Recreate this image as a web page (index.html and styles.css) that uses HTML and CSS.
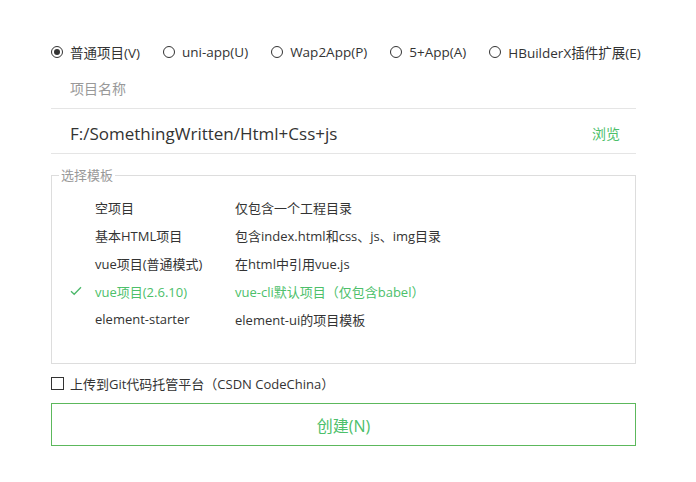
FILE: index.html
```html
<!DOCTYPE html>
<html lang="zh-CN">
<head>
<meta charset="utf-8">
<title>新建项目</title>
<link rel="stylesheet" href="styles.css">
</head>
<body>
<div class="page">
  <div class="radios">
    <label class="radio checked"><span class="dot"></span><span>普通项目(V)</span></label>
    <label class="radio"><span class="dot"></span><span>uni-app(U)</span></label>
    <label class="radio"><span class="dot"></span><span>Wap2App(P)</span></label>
    <label class="radio"><span class="dot"></span><span>5+App(A)</span></label>
    <label class="radio"><span class="dot"></span><span>HBuilderX插件扩展(E)</span></label>
  </div>
  <div class="field name"><span class="placeholder">项目名称</span></div>
  <div class="field path"><span class="value">F:/SomethingWritten/Html+Css+js</span><span class="browse">浏览</span></div>
  <fieldset class="templates">
    <legend>选择模板</legend>
    <div class="row"><span class="mark"></span><span class="t">空项目</span><span class="d">仅包含一个工程目录</span></div>
    <div class="row"><span class="mark"></span><span class="t">基本HTML项目</span><span class="d">包含index.html和css、js、img目录</span></div>
    <div class="row"><span class="mark"></span><span class="t">vue项目(普通模式)</span><span class="d">在html中引用vue.js</span></div>
    <div class="row active"><span class="mark"><svg width="12" height="10" viewBox="0 0 12 10"><path d="M1 5.2 L4.2 8.3 L11 1.3" fill="none" stroke="#4cb86a" stroke-width="1.3"/></svg></span><span class="t">vue项目(2.6.10)</span><span class="d">vue-cli默认项目（仅包含babel）</span></div>
    <div class="row"><span class="mark"></span><span class="t">element-starter</span><span class="d">element-ui的项目模板</span></div>
  </fieldset>
  <label class="check"><span class="box"></span><span>上传到Git代码托管平台（CSDN CodeChina）</span></label>
  <button class="create">创建(N)</button>
</div>
</body>
</html>
```
FILE: styles.css
```css
* { box-sizing: border-box; }
body {
  margin: 0;
  background: #fff;
  font-family: "Open Sans", "Noto Sans CJK SC", sans-serif;
  font-size: 13px;
  color: #333;
}
.page {
  width: 636px;
  padding: 43px 0 0 51px;
}
.radios {
  display: flex;
  align-items: center;
  gap: 23px;
  height: 18px;
  font-size: 13.5px;
}
.radio {
  display: flex;
  align-items: center;
  gap: 7px;
  color: #333;
  white-space: nowrap;
}
.dot {
  width: 12px;
  height: 12px;
  border: 1px solid #333;
  border-radius: 50%;
  display: flex;
  align-items: center;
  justify-content: center;
}
.radio.checked .dot::after {
  content: "";
  width: 6px;
  height: 6px;
  border-radius: 50%;
  background: #333;
}
.field {
  display: flex;
  align-items: center;
  justify-content: space-between;
  border-bottom: 1px solid #e5e5e5;
  padding: 0 16px 0 19px;
}
.field.name {
  margin-top: 9px;
  height: 39px;
  padding-bottom: 2px;
}
.placeholder { color: #999; font-size: 14px; }
.field.path { height: 45px; padding-top: 4px; }
.value { font-size: 17px; color: #333; }
.browse { color: #4cc06a; font-size: 14px; }
.templates {
  margin: 12px 0 0 0;
  padding: 9px 0 30px 0;
  border: 1px solid #ddd;
}
.templates legend {
  margin-left: 7px;
  padding: 0 2px;
  color: #999;
  font-size: 13px;
  line-height: 18px;
}
.row {
  display: grid;
  grid-template-columns: 43px 140px 1fr;
  align-items: center;
  height: 28px;
}
.mark {
  display: flex;
  align-items: center;
  padding-left: 18px;
}
.row.active { color: #4cc06a; }
.check {
  display: flex;
  align-items: center;
  gap: 6px;
  margin-top: 10px;
  height: 18px;
}
.box {
  width: 13px;
  height: 13px;
  border: 1px solid #333;
}
.create {
  display: block;
  width: 585px;
  height: 43px;
  margin-top: 11px;
  background: #fff;
  border: 1px solid #5cb85c;
  color: #4cc06a;
  font-family: inherit;
  font-size: 16px;
  padding: 0;
}
```
